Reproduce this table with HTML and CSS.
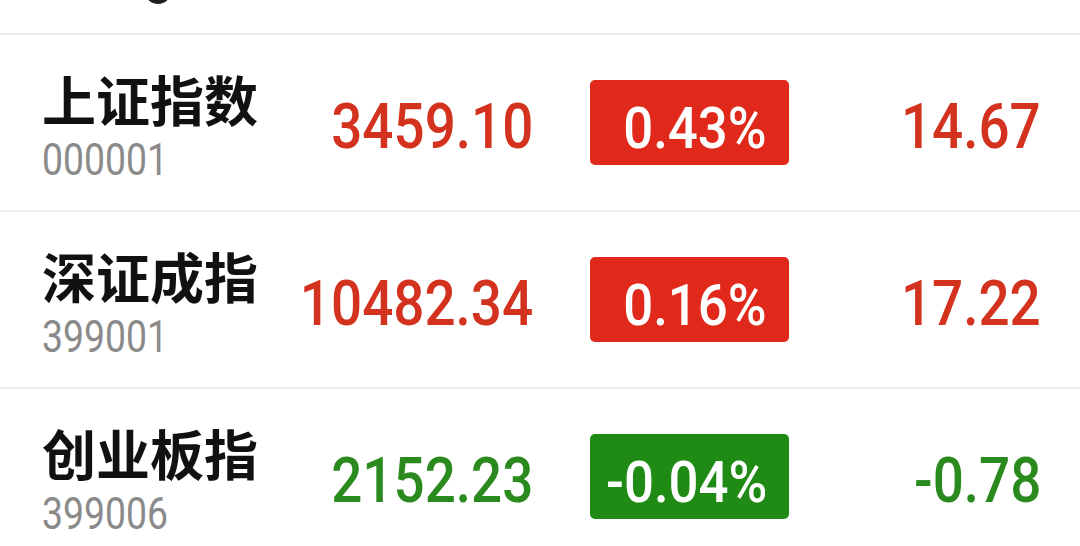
FILE: index.html
```html
<!DOCTYPE html>
<html lang="zh-CN">
<head>
  <meta charset="UTF-8" />
  <meta name="viewport" content="width=device-width, initial-scale=1.0"/>
  <title>指数行情</title>
  <link rel="stylesheet" href="styles.css">
</head>
<body>
  <div class="head">
    <span class="dot"></span>
  </div>

  <div class="row up">
    <div class="name">
      <div class="title">上证指数</div>
      <div class="code"><span>000001</span></div>
    </div>
    <div class="price"><span>3459.10</span></div>
    <div class="badge"><span>0.43%</span></div>
    <div class="change"><span>14.67</span></div>
  </div>

  <div class="row up">
    <div class="name">
      <div class="title">深证成指</div>
      <div class="code"><span>399001</span></div>
    </div>
    <div class="price"><span>10482.34</span></div>
    <div class="badge"><span>0.16%</span></div>
    <div class="change"><span>17.22</span></div>
  </div>

  <div class="row down">
    <div class="name">
      <div class="title">创业板指</div>
      <div class="code"><span>399006</span></div>
    </div>
    <div class="price"><span>2152.23</span></div>
    <div class="badge"><span>-0.04%</span></div>
    <div class="change"><span>-0.78</span></div>
  </div>
</body>
</html>
```

FILE: styles.css
```css
* { margin: 0; padding: 0; box-sizing: border-box; }
html, body {
  height: 100%;
  background: #fff;
  overflow: hidden;
  font-family: Roboto, "Noto Sans CJK SC", sans-serif;
}

/* cabecera cortada arriba */
.head {
  height: 33px;
  overflow: hidden;
  padding-left: 145px;
}

.dot {
  display: block;
  width: 26px;
  height: 26px;
  margin-top: -22px;
  border-radius: 50%;
  background: #1e1e1e;
}

.row {
  display: grid;
  grid-template-columns: 230px 261px 256px 252px;
  align-items: center;
  height: 177px;
  padding: 0 39px 0 42px;
  border-top: 2px solid #ededed;
}

.name { margin-top: 9px; }

.title {
  font-family: "Noto Sans CJK SC", sans-serif;
  font-weight: 700;
  font-size: 54px;
  line-height: 54px;
  color: #111;
}

.code {
  margin-top: 11px;
  font-size: 45px;
  line-height: 45px;
  color: #8a8a8a;
}

.code span {
  display: inline-block;
  transform: scaleX(0.83);
  transform-origin: left;
}

.price, .change {
  display: flex;
  justify-content: flex-end;
  margin-top: 8px;
  font-size: 63px;
  font-weight: 500;
  line-height: 63px;
  white-space: nowrap;
}

.price span, .change span, .badge span {
  display: inline-block;
  transform: scaleX(0.87);
  transform-origin: right;
}

.badge {
  display: flex;
  justify-content: flex-end;
  margin-left: 57px;
  width: 199px;
  height: 85px;
  padding: 19px 22px 0 0;
  border-radius: 5px;
  font-size: 58px;
  font-weight: 500;
  line-height: 58px;
  white-space: nowrap;
  color: #fff;
}

.badge span { transform: scaleX(0.91); }

.up .price, .up .change { color: #d2321e; }
.up .badge { background: #e0291b; }

.down .price, .down .change { color: #2b8a1e; }
.down .badge { background: #1f8b15; }
```
